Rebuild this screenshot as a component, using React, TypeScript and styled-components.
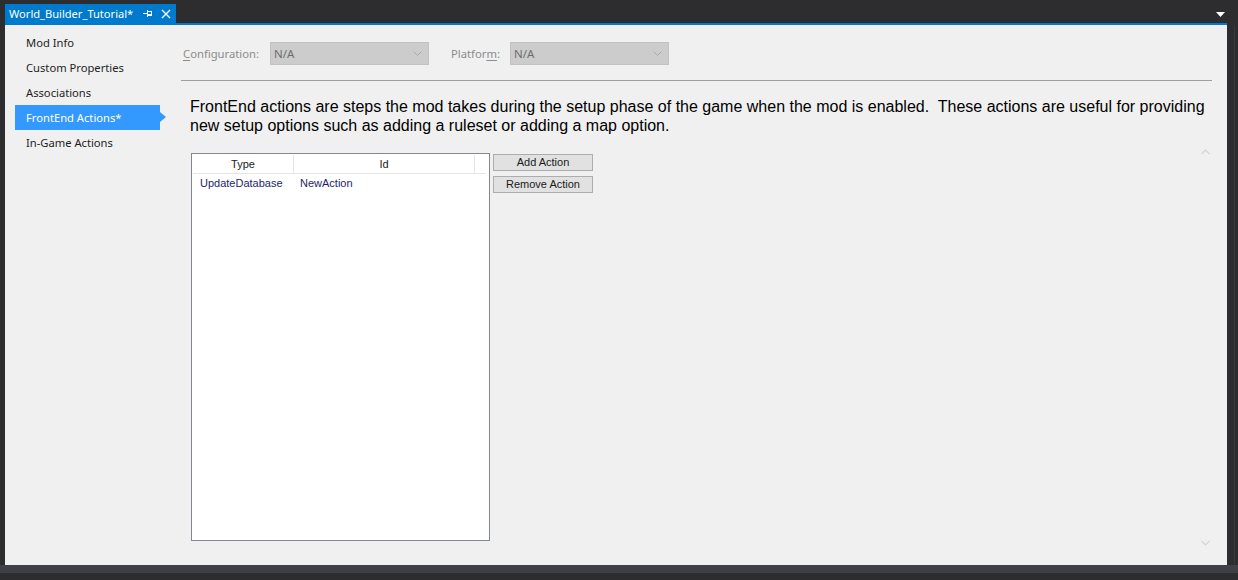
import React from "react";
import styled, { createGlobalStyle } from "styled-components";

const Global = createGlobalStyle`
  html, body { margin: 0; padding: 0; background: #2d2d30; }
  #root { width: 1238px; height: 580px; }
`;

const UI_FONT = `"Segoe UI", "Noto Sans", "Liberation Sans", sans-serif`;
const WIN_FONT = `"Liberation Sans", Arial, sans-serif`;

const Frame = styled.div`
  width: 1238px;
  height: 580px;
  display: flex;
  flex-direction: column;
  background: #2d2d30;
  overflow: hidden;
`;

const TabStrip = styled.div`
  height: 23px;
  flex: none;
  display: flex;
  align-items: flex-end;
  padding: 0 13px 0 5px;
  box-sizing: border-box;
`;

const Tab = styled.div`
  height: 19px;
  width: 171px;
  box-sizing: border-box;
  background: #007acc;
  color: #ffffff;
  display: flex;
  align-items: center;
  padding-left: 4px;
  font: 11.1px ${UI_FONT};
  white-space: nowrap;
`;

const TabTitle = styled.span`
  line-height: 19px;
  width: 124px;
  flex: none;
`;

const TabIcon = styled.svg<{ $gap: number }>`
  margin-left: ${(p) => p.$gap}px;
  flex: none;
  display: block;
`;

const ActiveFilesButton = styled.svg`
  margin-left: auto;
  align-self: flex-start;
  margin-top: 12px;
  display: block;
`;

const AccentLine = styled.div`
  height: 2px;
  flex: none;
  margin: 0 11px 0 5px;
  background: #007acc;
`;

const Middle = styled.div`
  display: flex;
  height: 540px;
  flex: none;
`;

const LeftGutter = styled.div`
  width: 5px;
  flex: none;
  background: #2d2d30;
`;

const RightGutter = styled.div`
  width: 11px;
  flex: none;
  background: linear-gradient(
    to right,
    #2d2d30 7px,
    #3a3a3e 7px,
    #3a3a3e 8px,
    #2d2d30 8px
  );
`;

const Panel = styled.div`
  position: relative;
  width: 1222px;
  flex: none;
  background: #f0f0f0;
  display: flex;
`;

const Sidebar = styled.nav`
  width: 176px;
  flex: none;
  padding-top: 5px;
  box-sizing: border-box;
  display: flex;
  flex-direction: column;
`;

const NavItem = styled.div<{ $selected?: boolean }>`
  position: relative;
  height: 25px;
  width: 145px;
  margin-left: 10px;
  padding-left: 11px;
  box-sizing: border-box;
  display: flex;
  align-items: center;
  font: 11.2px ${UI_FONT};
  color: ${(p) => (p.$selected ? "#ffffff" : "#1e1e1e")};
  background: ${(p) => (p.$selected ? "#3399ff" : "transparent")};

  &::after {
    content: "";
    display: ${(p) => (p.$selected ? "block" : "none")};
    position: absolute;
    right: -6px;
    top: 7px;
    border-left: 6px solid #3399ff;
    border-top: 5.5px solid transparent;
    border-bottom: 5.5px solid transparent;
  }
`;

const Main = styled.div`
  flex: 1;
  min-width: 0;
  padding: 17px 15px 0 0;
  display: flex;
  flex-direction: column;
`;

const ConfigRow = styled.div`
  display: flex;
  align-items: center;
  height: 23px;
  padding-left: 2px;
`;

const FieldLabel = styled.span<{ $width: number; $offset?: number }>`
  width: ${(p) => p.$width}px;
  margin-left: ${(p) => p.$offset ?? 0}px;
  flex: none;
  font: 11.25px ${UI_FONT};
  color: #8c8c8c;
  white-space: nowrap;

  u {
    text-decoration: underline;
    text-underline-offset: 2px;
  }
`;

const Combo = styled.div`
  width: 159px;
  height: 23px;
  flex: none;
  box-sizing: border-box;
  background: #cccccc;
  border: 1px solid #c2c2c2;
  display: flex;
  align-items: center;
  padding: 0 6px 0 3px;
  font: 11.5px ${UI_FONT};
  color: #6d6d6d;
`;

const ComboValue = styled.span`
  flex: 1;
`;

const Separator = styled.div`
  height: 1px;
  margin-top: 15px;
  background: #a0a0a0;
`;

const Description = styled.p`
  margin: 16px 0 0;
  padding-left: 9px;
  box-sizing: border-box;
  width: 1030px;
  font: 16px ${WIN_FONT};
  line-height: 19px;
  color: #000000;
  white-space: pre-wrap;
`;

const ContentRow = styled.div`
  display: flex;
  align-items: flex-start;
  margin-top: 18px;
  padding-left: 10px;
`;

const ListView = styled.div`
  width: 299px;
  height: 388px;
  flex: none;
  box-sizing: border-box;
  border: 1px solid #828790;
  background: #ffffff;
  padding: 1px 3px 0 1px;
  font: normal 11px ${WIN_FONT};
  color: #000000;
`;

const HeaderRow = styled.div`
  display: flex;
  height: 19px;
  box-sizing: border-box;
  border-bottom: 1px solid #e5e5e5;
`;

const HeaderCell = styled.div<{ $width: number; $last?: boolean }>`
  width: ${(p) => p.$width}px;
  flex: none;
  box-sizing: border-box;
  border-right: ${(p) => (p.$last ? "none" : "1px solid #e5e5e5")};
  display: flex;
  align-items: center;
  justify-content: center;
  font-weight: 400;
  color: #1a1a1a;
`;

const DataRow = styled.div`
  display: flex;
  height: 17px;
  align-items: center;
`;

const DataCell = styled.div<{ $width: number; $indent: number }>`
  width: ${(p) => p.$width}px;
  flex: none;
  box-sizing: border-box;
  padding-left: ${(p) => p.$indent}px;
  color: #1e1e6e;
  white-space: nowrap;
`;

const ButtonColumn = styled.div`
  display: flex;
  flex-direction: column;
  margin-left: 3px;
  padding-top: 1px;
`;

const ActionButton = styled.button<{ $gap?: number }>`
  width: 100px;
  height: 17px;
  margin-top: ${(p) => p.$gap ?? 0}px;
  padding: 0;
  box-sizing: border-box;
  background: #e1e1e1;
  border: 1px solid #adadad;
  border-radius: 0;
  font: normal 11px ${WIN_FONT};
  color: #1a1a1a;
  line-height: 1;
`;

const ScrollArrow = styled.svg<{ $top: number }>`
  position: absolute;
  left: 1196px;
  top: ${(p) => p.$top}px;
  display: block;
`;

const BottomBar = styled.div`
  height: 8px;
  flex: none;
  background: #3f3f46;
`;

const Chevron = () => (
  <svg width="9" height="5" viewBox="0 0 9 5">
    <path d="M0.5 0.5 L4.5 4.5 L8.5 0.5" fill="none" stroke="#aaaaaa" strokeWidth="1" />
  </svg>
);

const navItems = [
  "Mod Info",
  "Custom Properties",
  "Associations",
  "FrontEnd Actions*",
  "In-Game Actions",
];

export default function App() {
  return (
    <>
      <Global />
      <Frame>
        <TabStrip>
          <Tab>
            <TabTitle>World_Builder_Tutorial*</TabTitle>
            <TabIcon $gap={10} width="10" height="9" viewBox="0 0 10 9">
              <path d="M0 4.5 H4" stroke="#ffffff" strokeWidth="1" />
              <path d="M4.5 1 V8" stroke="#ffffff" strokeWidth="1" />
              <rect x="4.5" y="2.5" width="4" height="4" fill="none" stroke="#ffffff" strokeWidth="1" />
              <path d="M5 5.5 H8.5" stroke="#ffffff" strokeWidth="1" />
            </TabIcon>
            <TabIcon $gap={8} width="10" height="10" viewBox="0 0 10 10">
              <path d="M1 1 L9 9 M9 1 L1 9" stroke="#ffffff" strokeWidth="1.4" />
            </TabIcon>
          </Tab>
          <ActiveFilesButton width="9" height="5" viewBox="0 0 9 5">
            <path d="M0 0 H9 L4.5 5 Z" fill="#ffffff" />
          </ActiveFilesButton>
        </TabStrip>
        <AccentLine />
        <Middle>
          <LeftGutter />
          <Panel>
            <Sidebar>
              {navItems.map((item) => (
                <NavItem key={item} $selected={item === "FrontEnd Actions*"}>
                  {item}
                </NavItem>
              ))}
            </Sidebar>
            <Main>
              <ConfigRow>
                <FieldLabel $width={87}>
                  <u>C</u>onfiguration:
                </FieldLabel>
                <Combo>
                  <ComboValue>N/A</ComboValue>
                  <Chevron />
                </Combo>
                <FieldLabel $width={59} $offset={22}>
                  Platfor<u>m</u>:
                </FieldLabel>
                <Combo>
                  <ComboValue>N/A</ComboValue>
                  <Chevron />
                </Combo>
              </ConfigRow>
              <Separator />
              <Description>
                {
                  "FrontEnd actions are steps the mod takes during the setup phase of the game when the mod is enabled.  These actions are useful for providing new setup options such as adding a ruleset or adding a map option."
                }
              </Description>
              <ContentRow>
                <ListView>
                  <HeaderRow>
                    <HeaderCell $width={101}>Type</HeaderCell>
                    <HeaderCell $width={181}>Id</HeaderCell>
                    <HeaderCell $width={11} $last />
                  </HeaderRow>
                  <DataRow>
                    <DataCell $width={101} $indent={7}>
                      UpdateDatabase
                    </DataCell>
                    <DataCell $width={181} $indent={6}>
                      NewAction
                    </DataCell>
                  </DataRow>
                </ListView>
                <ButtonColumn>
                  <ActionButton>Add Action</ActionButton>
                  <ActionButton $gap={5}>Remove Action</ActionButton>
                </ButtonColumn>
              </ContentRow>
            </Main>
            <ScrollArrow $top={124} width="9" height="6" viewBox="0 0 9 6">
              <path d="M0.5 5 L4.5 1 L8.5 5" fill="none" stroke="#d4d4d4" strokeWidth="1.2" />
            </ScrollArrow>
            <ScrollArrow $top={515} width="9" height="6" viewBox="0 0 9 6">
              <path d="M0.5 1 L4.5 5 L8.5 1" fill="none" stroke="#d4d4d4" strokeWidth="1.2" />
            </ScrollArrow>
          </Panel>
          <RightGutter />
        </Middle>
        <BottomBar />
      </Frame>
    </>
  );
}
